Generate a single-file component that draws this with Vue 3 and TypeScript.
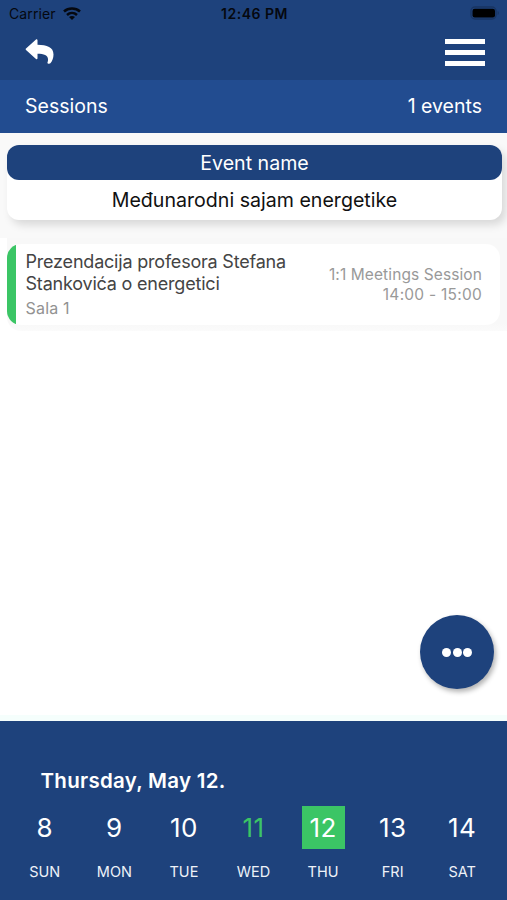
<script setup lang="ts">
interface Day {
  date: number
  label: string
  state?: 'today' | 'selected'
}

const days: Day[] = [
  { date: 8, label: 'SUN' },
  { date: 9, label: 'MON' },
  { date: 10, label: 'TUE' },
  { date: 11, label: 'WED', state: 'today' },
  { date: 12, label: 'THU', state: 'selected' },
  { date: 13, label: 'FRI' },
  { date: 14, label: 'SAT' },
]
</script>

<template>
  <div class="screen">
    <header class="top">
      <div class="status">
        <div class="carrier">
          <span>Carrier</span>
          <svg class="wifi" viewBox="0 0 18 13" aria-hidden="true">
            <path d="M1 4.500C5.400.5 12.600.5 17 4.500M4 8c2.900-2.700 7.100-2.700 10 0" fill="none" stroke="#05080f" stroke-width="2.500" />
            <path d="M9 13 6 10c1.700-1.500 4.300-1.500 6 0z" fill="#05080f" />
          </svg>
        </div>
        <span class="clock">12:46 PM</span>
        <svg class="battery" viewBox="0 0 30 14" aria-hidden="true">
          <rect x="1" y="1" width="25" height="12" rx="4" fill="none" stroke="#193562" stroke-width="1.4" />
          <rect x="2.500" y="2.700" width="22.500" height="8.800" rx="2.200" fill="#000" />
          <path d="M27.600 5c1.600.7 1.600 3.300 0 4z" fill="#193562" />
        </svg>
      </div>
      <div class="nav">
        <svg class="back" viewBox="0 0 28 25" aria-hidden="true">
          <path d="M.5 9.600 10.500.6c.6-.5 1.500-.2 1.500.7v4.500C21.500 5.900 28 8.200 28 15.500c0 3.300-1.100 6.500-3.100 8.800-.7.8-3.100.6-3-.6.1-.5.4-1.100.5-1.700 1-5.800-3.400-7.100-10.400-7.200v4.400c0 .9-.9 1.200-1.500.7L.5 11c-.5-.4-.5-1 0-1.400z" fill="#fff" />
        </svg>
        <div class="burger"><i></i><i></i><i></i></div>
      </div>
    </header>

    <div class="subbar">
      <span>Sessions</span>
      <span>1 events</span>
    </div>

    <section class="event-area">
      <div class="event-card">
        <div class="event-head">Event name</div>
        <div class="event-body">Međunarodni sajam energetike</div>
      </div>
    </section>

    <main class="list">
      <div class="session-shade">
        <article class="session">
          <div class="info">
            <div class="title">Prezendacija profesora Stefana<br />Stankovića o energetici</div>
            <div class="room">Sala 1</div>
          </div>
          <div class="meta">
            <div class="kind">1:1 Meetings Session</div>
            <div class="time">14:00 - 15:00</div>
          </div>
        </article>
      </div>
      <button class="fab" aria-label="More"><i></i><i></i><i></i></button>
    </main>

    <footer class="calendar">
      <div class="current">Thursday, May 12.</div>
      <div class="week">
        <div v-for="d in days" :key="d.date" class="day">
          <span class="num" :class="d.state">{{ d.date }}</span>
          <span class="label">{{ d.label }}</span>
        </div>
      </div>
    </footer>
  </div>
</template>

<style>
body {
  margin: 0;
  background: #fff;
}
</style>

<style scoped>
.screen {
  width: 507px;
  height: 900px;
  display: flex;
  flex-direction: column;
  overflow: hidden;
  background: #fff;
  font-family: Inter, "Liberation Sans", sans-serif;
  color: #fff;
}
.screen * {
  box-sizing: border-box;
}
.top {
  height: 80px;
  background: #1e427c;
}
.status {
  height: 27px;
  padding: 0 7px 0 9px;
  display: grid;
  grid-template-columns: 1fr auto 1fr;
  align-items: center;
  color: #05080f;
  font-size: 14px;
  line-height: 27px;
}
.carrier {
  display: flex;
  align-items: center;
  gap: 7px;
  letter-spacing: 0.1px;
}
.wifi {
  width: 18px;
  height: 13px;
  margin-top: -1px;
}
.clock {
  font-weight: 600;
  letter-spacing: 0.5px;
}
.battery {
  width: 30px;
  height: 14px;
  margin-top: -1px;
  justify-self: end;
}
.nav {
  height: 53px;
  padding: 12px 22px 0 25px;
  display: flex;
  justify-content: space-between;
}
.back {
  width: 29px;
  height: 25px;
}
.burger {
  width: 40px;
  height: 27px;
  display: flex;
  flex-direction: column;
  justify-content: space-between;
}
.burger i {
  height: 5px;
  background: #fff;
}
.subbar {
  height: 53px;
  padding: 0 25px 1px;
  display: flex;
  align-items: center;
  justify-content: space-between;
  background: #224c90;
  font-size: 19.5px;
}
.event-area {
  height: 105px;
  padding: 12px 5px 0 7px;
  background: #f9f9f9;
}
.event-card {
  height: 75px;
  border-radius: 12px;
  background: #fff;
  box-shadow: 4px 5px 9px rgba(0, 0, 0, 0.13);
  text-align: center;
  font-size: 19.6px;
}
.event-head {
  height: 35px;
  line-height: 36px;
  border-radius: 12px;
  background: #1e427c;
}
.event-body {
  line-height: 40px;
  color: #111;
}
.list {
  flex: 1;
  display: flex;
  flex-direction: column;
  justify-content: space-between;
  align-items: flex-end;
}
.session-shade {
  width: 500px;
  height: 93px;
  padding: 6px 7px 0 0;
  border-radius: 0 0 0 14px;
  background: linear-gradient(#f8f8f8 86px, #fbfbfb);
}
.session {
  height: 81px;
  padding: 7px 18px 0 18.5px;
  display: flex;
  justify-content: space-between;
  border-radius: 14px;
  background: linear-gradient(90deg, #3bc565 9px, #fff 9px);
}
.title {
  font-size: 18px;
  line-height: 21.5px;
  letter-spacing: -0.2px;
  color: #444;
  white-space: nowrap;
}
.room {
  margin-top: 4px;
  font-size: 16px;
  line-height: 20px;
  letter-spacing: 0.2px;
  color: #929292;
}
.meta {
  padding-top: 14px;
  text-align: right;
  font-size: 15.5px;
  line-height: 19.5px;
  color: #999;
  white-space: nowrap;
}
.kind {
  letter-spacing: 0.1px;
}
.time {
  letter-spacing: 0.25px;
}
.fab {
  width: 74px;
  height: 74px;
  margin: 0 13px 32px 0;
  padding: 0;
  display: flex;
  align-items: center;
  justify-content: center;
  gap: 1.5px;
  border: 0;
  border-radius: 50%;
  background: #1e427c;
  box-shadow: 2px 3px 5px rgba(0, 0, 0, 0.3);
}
.fab i {
  width: 9px;
  height: 9px;
  border-radius: 50%;
  background: #fff;
}
.calendar {
  height: 179px;
  padding: 46px 10px 0;
  background: #1e427c;
  box-shadow: 0 -6px 0 #f5fefc;
}
.current {
  padding-left: 30.5px;
  font-size: 20.5px;
  font-weight: 600;
  line-height: 28px;
  letter-spacing: 0.28px;
}
.week {
  margin-top: 11px;
  display: grid;
  grid-template-columns: repeat(7, 1fr);
}
.day {
  display: flex;
  flex-direction: column;
  align-items: center;
}
.num {
  width: 43px;
  height: 43px;
  line-height: 43px;
  text-align: center;
  font-size: 26px;
  letter-spacing: 0.4px;
}
.num.today {
  color: #3bc565;
}
.num.selected {
  background: #3bc565;
}
.label {
  margin-top: 13px;
  font-size: 14.5px;
  line-height: 20px;
  color: #eef2f8;
}
</style>
